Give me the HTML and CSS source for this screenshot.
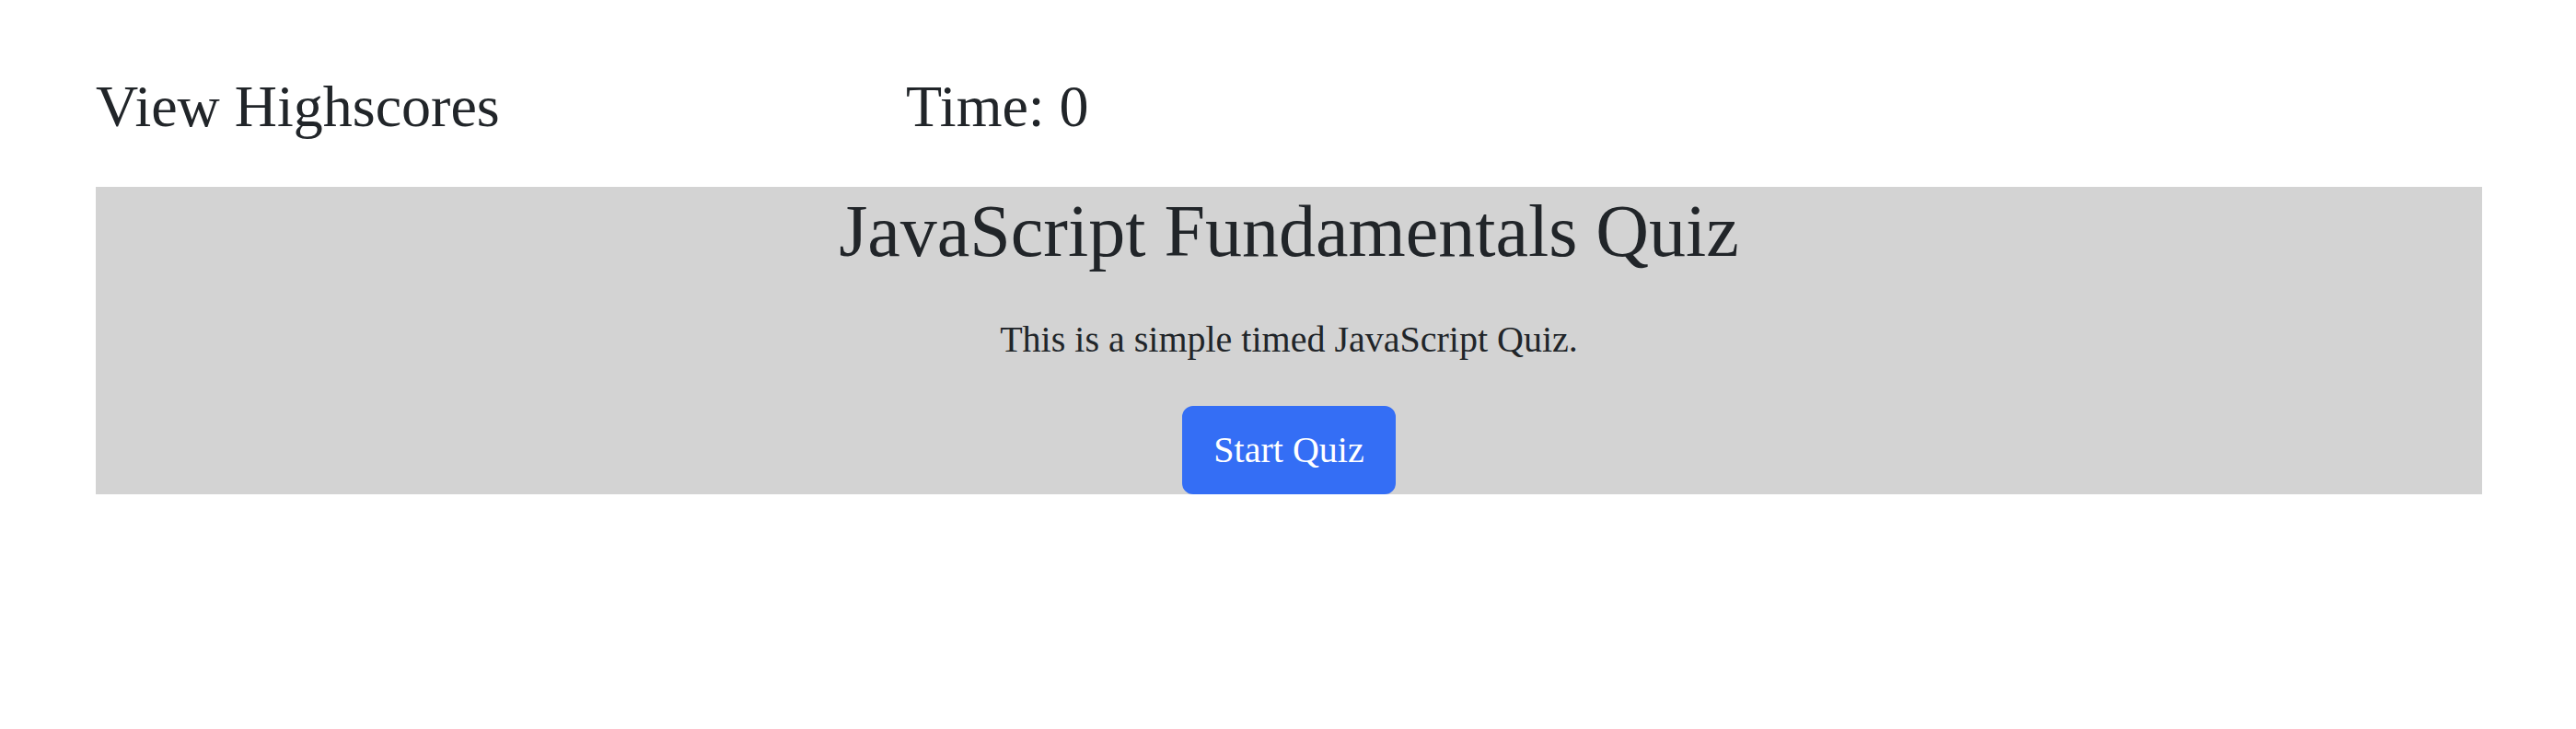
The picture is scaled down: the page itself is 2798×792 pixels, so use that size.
FILE: index.html
```html
<!DOCTYPE html>
<html lang="en">
<head>
<meta charset="utf-8">
<title>JavaScript Fundamentals Quiz</title>
<link rel="stylesheet" href="styles.css">
</head>
<body>
<div class="page">
  <header class="topbar">
    <h2 class="topbar-item">View Highscores</h2>
    <h2 class="topbar-item">Time: 0</h2>
  </header>
  <section class="intro">
    <h1 class="intro-title">JavaScript Fundamentals Quiz</h1>
    <p class="intro-text">This is a simple timed JavaScript Quiz.</p>
    <button class="start-btn" type="button">Start Quiz</button>
  </section>
</div>
</body>
</html>
```

FILE: styles.css
```css
* {
  box-sizing: border-box;
}

html, body {
  margin: 0;
  padding: 0;
  background: #ffffff;
}

body {
  font-family: "Liberation Serif", "Times New Roman", Times, serif;
  color: #212529;
}

.page {
  padding: 78px 102px 0 104px;
}

.topbar {
  display: grid;
  grid-template-columns: repeat(3, 1fr);
  column-gap: 48px;
  margin-bottom: 48px;
}

.topbar-item {
  margin: 0;
  font-size: 64px;
  font-weight: 400;
  line-height: 1.2;
}

.intro {
  background: #d3d3d3;
  display: flex;
  flex-direction: column;
  align-items: center;
  text-align: center;
}

.intro-title {
  margin: 0 0 40px;
  font-size: 80px;
  font-weight: 400;
  line-height: 1.2;
}

.intro-text {
  margin: 0 0 42px;
  font-size: 40px;
  line-height: 1.5;
}

.start-btn {
  font-family: "Liberation Serif", "Times New Roman", Times, serif;
  font-size: 40px;
  line-height: 1.5;
  padding: 16px 32px;
  color: #ffffff;
  background: #346ef5;
  border: 2px solid #346ef5;
  border-radius: 12px;
  cursor: pointer;
}
```
